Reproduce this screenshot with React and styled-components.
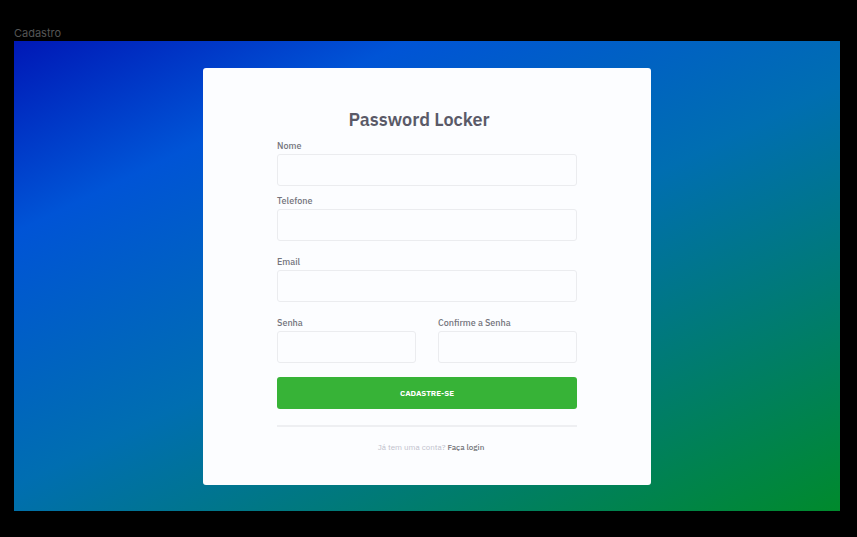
import React from "react";
import styled, { createGlobalStyle } from "styled-components";

const GlobalStyle = createGlobalStyle`
  *, *::before, *::after { box-sizing: border-box; }
  body {
    margin: 0;
    background: #000;
    font-family: "IBM Plex Sans", Roboto, "Noto Sans", sans-serif;
  }
  input, button { font: inherit; }
`;

const Page = styled.div`
  min-height: 100vh;
  display: flex;
  flex-direction: column;
  padding: 25px 17px 26px 14px;
`;

const FrameLabel = styled.div`
  font-family: Inter, sans-serif;
  font-size: 11px;
  line-height: 16px;
  color: #555;
`;

const Frame = styled.main`
  flex: 1;
  display: flex;
  justify-content: center;
  align-items: center;
  padding: 27px 16px 26px;
  background: linear-gradient(
    154deg,
    #0018b6 0%,
    #0054d6 22%,
    #006eb1 51%,
    #008a2c 100%
  );
`;

const Card = styled.form`
  width: 100%;
  max-width: 448px;
  display: flex;
  flex-direction: column;
  padding: 40px 74px 32px;
  border-radius: 3px;
  background: #fcfdff;
`;

const Title = styled.h1`
  margin: 0 0 8px;
  padding-right: 16px;
  font-size: 18px;
  font-weight: 600;
  line-height: 24px;
  text-align: center;
  color: #5a5a68;
`;

const Field = styled.label`
  display: flex;
  flex-direction: column;
  gap: 2px;
  min-width: 0;
  margin-bottom: ${({ $gap = 15 }) => $gap}px;
  font-size: 9px;
  font-weight: 500;
  line-height: 12px;
  color: #74747c;
`;

const TextInput = styled.input`
  width: 100%;
  height: 32px;
  padding: 0 10px;
  border: 1px solid #ebecef;
  border-radius: 3px;
  background: transparent;
  color: #555562;
`;

const FieldRow = styled.div`
  display: grid;
  grid-template-columns: 1fr 1fr;
  column-gap: 22px;
`;

const SubmitButton = styled.button`
  height: 32px;
  border: 0;
  border-radius: 3px;
  background: #37b337;
  color: #fff;
  font-size: 8px;
  font-weight: 700;
  cursor: pointer;
`;

const Divider = styled.hr`
  width: 100%;
  margin: 16px 0 14px;
  border: 0;
  border-top: 2px solid #eeeff2;
`;

const Footer = styled.p`
  margin: 0;
  padding-left: 8px;
  font-size: 8px;
  line-height: 12px;
  text-align: center;
  color: #c0bfcc;
`;

const LoginLink = styled.a`
  color: #737378;
  font-weight: 500;
  text-decoration: none;
`;

export default function App() {
  return (
    <>
      <GlobalStyle />
      <Page>
        <FrameLabel>Cadastro</FrameLabel>
        <Frame>
          <Card onSubmit={(event) => event.preventDefault()}>
            <Title>Password Locker</Title>
            <Field $gap={9}>
              Nome
              <TextInput type="text" name="nome" />
            </Field>
            <Field>
              Telefone
              <TextInput type="tel" name="telefone" />
            </Field>
            <Field>
              Email
              <TextInput type="email" name="email" />
            </Field>
            <FieldRow>
              <Field $gap={14}>
                Senha
                <TextInput type="password" name="senha" />
              </Field>
              <Field $gap={14}>
                Confirme a Senha
                <TextInput type="password" name="confirmacao" />
              </Field>
            </FieldRow>
            <SubmitButton type="submit">CADASTRE-SE</SubmitButton>
            <Divider />
            <Footer>
              Já tem uma conta? <LoginLink href="#login">Faça login</LoginLink>
            </Footer>
          </Card>
        </Frame>
      </Page>
    </>
  );
}
